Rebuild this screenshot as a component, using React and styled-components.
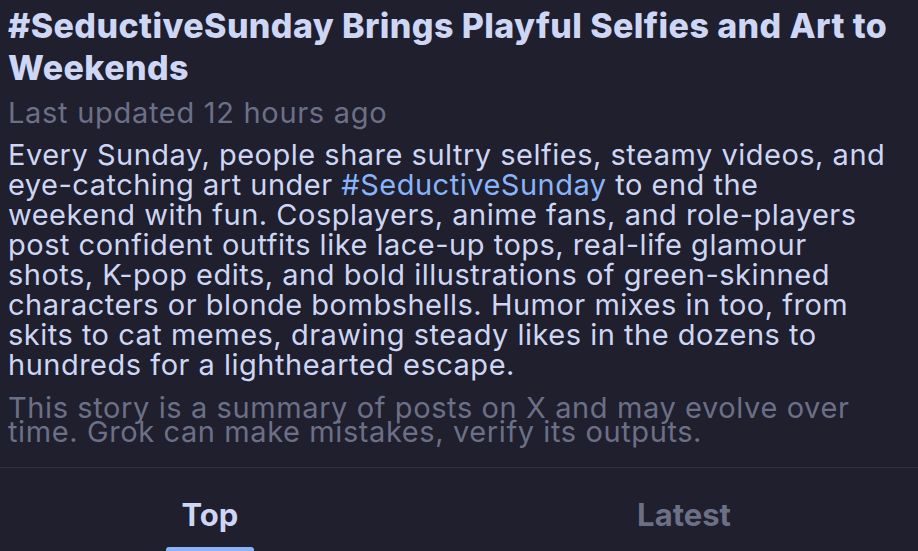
import React from 'react';
import styled, { createGlobalStyle } from 'styled-components';

const GlobalStyle = createGlobalStyle`
    html, body {
        margin: 0;
        padding: 0;
        background: #1f1f2e;
    }
    body {
        font-family: Inter, "Noto Sans", sans-serif;
        overflow: hidden;
    }
`;

export default function App() {
    return (
        <Page>
            <GlobalStyle />

            <Story>
                <Title>#SeductiveSunday Brings Playful Selfies and Art to Weekends</Title>
                <Updated>Last updated 12 hours ago</Updated>
                <Summary>
                    Every Sunday, people share sultry selfies, steamy videos, and eye-catching art under{' '}
                    <Tag>#SeductiveSunday</Tag> to end the weekend with fun. Cosplayers, anime fans, and
                    role-players post confident outfits like lace-up tops, real-life glamour shots, K-pop
                    edits, and bold illustrations of green-skinned characters or blonde bombshells. Humor
                    mixes in too, from skits to cat memes, drawing steady likes in the dozens to hundreds
                    for a lighthearted escape.
                </Summary>
                <Disclaimer>
                    This story is a summary of posts on X and may evolve over time. Grok can make
                    mistakes, verify its outputs.
                </Disclaimer>
            </Story>

            <Tabs>
                <Tab active>Top<Indicator /></Tab>
                <Tab>Latest</Tab>
            </Tabs>
        </Page>
    );
}

const Page = styled.div`
    width: 918px;
    height: 551px;
    background: #1f1f2e;
    color: #cdd6f4;
    overflow: hidden;
`;

const Story = styled.section`
    padding: 5px 25px 0 8px;
    border-bottom: 1px solid #313244;
    height: 468px;
    box-sizing: border-box;
`;

const Title = styled.h1`
    margin: 0;
    font-size: 34px;
    line-height: 42px;
    font-weight: 800;
    letter-spacing: 0.4px;
    color: #cdd6f4;
`;

const Updated = styled.p`
    margin: 6px 0 0 0;
    font-size: 29px;
    line-height: 36px;
    letter-spacing: 0.7px;
    color: #6c7086;
`;

const Summary = styled.p`
    margin: 9px 0 0 0;
    font-size: 29px;
    line-height: 30px;
    letter-spacing: 0.5px;
    color: #cdd6f4;
`;

const Tag = styled.span`
    color: #89b4fa;
`;

const Disclaimer = styled.p`
    margin: 16px 0 0 0;
    font-size: 29px;
    line-height: 24px;
    letter-spacing: 0.6px;
    color: #6c7086;
`;

const Tabs = styled.nav`
    display: grid;
    grid-template-columns: 420px 420px;
    column-gap: 54px;
    height: 92px;
`;

const Tab = styled.div`
    position: relative;
    display: flex;
    align-items: center;
    justify-content: center;
    font-size: 31px;
    font-weight: 700;
    color: ${(props) => (props.active ? '#cdd6f4' : '#6c7086')};
`;

const Indicator = styled.span`
    position: absolute;
    left: 50%;
    top: 79px;
    width: 88px;
    height: 6px;
    margin-left: -44px;
    border-radius: 3px;
    background: #89b4fa;
`;
